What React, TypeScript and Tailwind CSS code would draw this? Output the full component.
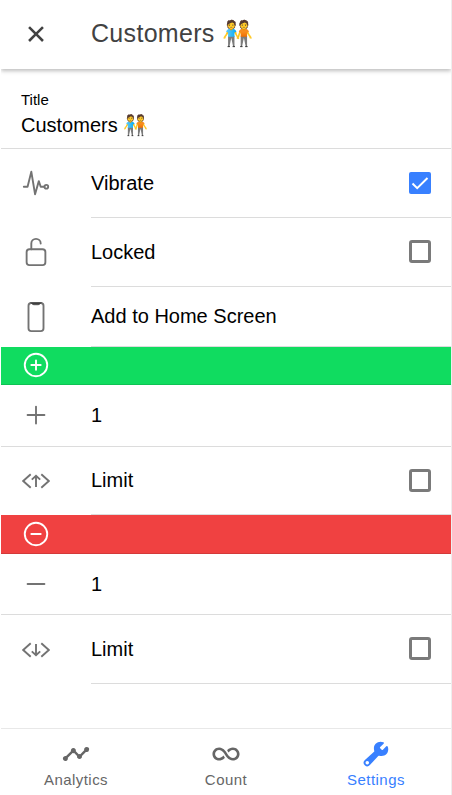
import type { ReactNode } from 'react';
import {
  IoAddCircleOutline,
  IoAddOutline,
  IoAnalyticsSharp,
  IoBuild,
  IoCloseSharp,
  IoInfiniteSharp,
  IoLockOpenOutline,
  IoPhonePortraitOutline,
  IoPulseOutline,
  IoRemoveCircleOutline,
  IoRemoveOutline,
} from 'react-icons/io5';

function LimitIcon({ down = false }: { down?: boolean }) {
  return (
    <svg viewBox="0 0 28 28" className="size-7" fill="none" stroke="currentColor" strokeWidth="1.9" strokeLinecap="butt" strokeLinejoin="miter">
      <path d="M8.700 7.300 1.200 14l7.500 6.700M19.300 7.300 26.800 14l-7.500 6.700" />
      {down ? <path d="M14 8v11.500M9.800 15.400l4.200 3.900 4.200-3.900" /> : <path d="M14 20V8.700M9.800 12.600 14 8.700l4.200 3.900" />}
    </svg>
  );
}

function Checkbox({ checked = false }: { checked?: boolean }) {
  if (!checked) return <span className="h-[23px] w-[22px] rounded-[3px] border-[3px] border-[#7a7a7a]" />;
  return (
    <span className="size-[22px] rounded-[2px] bg-[#3880ff]">
      <svg viewBox="0 0 22 22" className="size-full" fill="none" stroke="white" strokeWidth="2">
        <path d="m3.500 11.500 4.700 4.700L18.500 6" />
      </svg>
    </span>
  );
}

function Row({ icon, label, height, full = false, raised = false, iconPad = '', end }: { icon: ReactNode; label: string; height: string; full?: boolean; raised?: boolean; iconPad?: string; end?: ReactNode }) {
  return (
    <div className={`flex ${height} ${full ? 'border-b border-[#dcdcdc]' : ''}`}>
      <div className={`flex w-[90px] items-center pl-5 text-[#737373] ${iconPad}`}>
        <div className="flex w-[30px] justify-center">{icon}</div>
      </div>
      <div className={`flex flex-1 items-center justify-between pr-5 text-[20px] ${raised ? 'pb-px' : ''} ${full ? '' : 'border-b border-[#dcdcdc]'}`}>
        <span>{label}</span>
        {end}
      </div>
    </div>
  );
}

function Tab({ icon, label, active = false }: { icon: ReactNode; label: string; active?: boolean }) {
  return (
    <div className={`flex flex-1 flex-col items-center pt-[11px] text-[15px] leading-[20px] tracking-[0.45px] ${active ? 'text-[#3880ff]' : 'text-[#666666]'}`}>
      {icon}
      <span className="mt-[2px]">{label}</span>
    </div>
  );
}

export default function App() {
  return (
    <main className="flex h-[795px] w-[452px] flex-col border-r border-l border-r-[#eeeeee] border-l-white bg-white font-['Liberation_Sans',Arial,'Noto_Color_Emoji',sans-serif] text-black">
      <div className="-mb-[8px] shrink-0 overflow-hidden pb-[8px]">
        <header className="flex h-[69px] items-center pl-[21px] text-[#424242] shadow-[0_2px_4px_rgba(0,0,0,0.26)]">
          <IoCloseSharp className="-mt-[2px] size-7" />
          <h1 className="-mt-[2px] ml-[41px] text-[25px] tracking-[0.31px]">Customers 🧑‍🤝‍🧑</h1>
        </header>
      </div>
      <section className="h-20 shrink-0 border-b border-[#dcdcdc] pt-[22px] pl-5">
        <div className="text-[15px] leading-[17px]">Title</div>
        <div className="mt-[6px] text-[20px] leading-[23px]">Customers 🧑‍🤝‍🧑</div>
      </section>
      <Row height="h-[69px]" raised iconPad="pb-px" icon={<IoPulseOutline className="size-[30px]" />} label="Vibrate" end={<Checkbox checked />} />
      <Row height="h-[69px]" raised iconPad="pb-[2px]" icon={<IoLockOpenOutline className="size-[30px]" />} label="Locked" end={<Checkbox />} />
      <Row
        height="h-[60px]"
        raised
        icon={
          <span className="flex flex-col items-center">
            <IoPhonePortraitOutline className="size-[30px]" />
            <svg viewBox="0 0 12 3" className="-mt-[30px] mb-[27px] h-[3px] w-3">
              <path d="M0 .5h12L9.500 2.600h-7Z" className="fill-[#3f3f3f]" />
            </svg>
          </span>
        }
        label="Add to Home Screen"
      />
      <div className="flex h-[38px] items-center border-b border-[#0ec254] bg-[#10dc60] pb-px pl-5 text-white">
        <IoAddCircleOutline className="size-[30px]" />
      </div>
      <Row height="h-[62px]" raised full iconPad="pb-px" icon={<IoAddOutline className="size-[30px]" />} label="1" />
      <Row height="h-[68px]" raised icon={<LimitIcon />} label="Limit" end={<Checkbox />} />
      <div className="flex h-[39px] items-center border-b border-[#d33939] bg-[#f04141] pl-5 text-white">
        <IoRemoveCircleOutline className="size-[30px]" />
      </div>
      <Row height="h-[61px]" icon={<IoRemoveOutline className="size-[30px]" />} label="1" full />
      <Row height="h-[69px]" raised icon={<LimitIcon down />} label="Limit" end={<Checkbox />} />
      <nav className="mt-auto flex h-[67px] shrink-0 border-t border-[#e8e8e8]">
        <Tab icon={<IoAnalyticsSharp className="size-7" />} label="Analytics" />
        <Tab icon={<IoInfiniteSharp className="size-7" />} label="Count" />
        <Tab icon={<IoBuild className="size-7" />} label="Settings" active />
      </nav>
    </main>
  );
}
